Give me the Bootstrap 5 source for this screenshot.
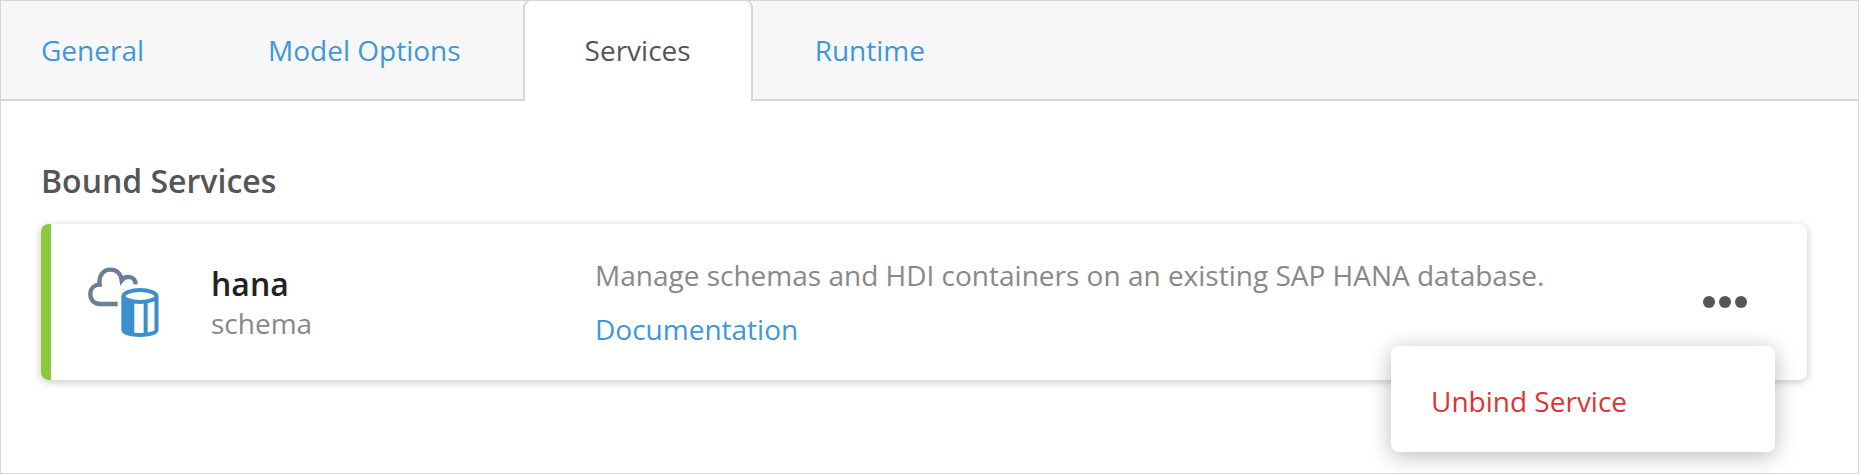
<!DOCTYPE html>
<html lang="en">
<head>
<meta charset="utf-8">
<meta name="viewport" content="width=device-width, initial-scale=1">
<title>Services</title>
<link href="https://cdn.jsdelivr.net/npm/bootstrap@5.3.0/dist/css/bootstrap.min.css" rel="stylesheet">
<style>
  body { font-family: "Open Sans", sans-serif; font-size: 28px; line-height: 38px; color: #555; }
  a { color: #3f97d9; text-decoration: none; }
  .app-frame { height: 474px; border: 1px solid #d6d6d6; }
  .app-tabs { height: 100px; background: #f7f7f7; border-bottom: 2px solid #d6d6d6; padding-left: 0; }
  .app-tabs .nav-item { height: 100px; }
  .app-tabs .nav-link { height: 100px; margin: 0; padding: 30px 60px; border: 2px solid transparent; border-top: 0; border-bottom: 0; border-radius: 8px 8px 0 0; color: #3f97d9; }
  .app-tabs .nav-item:first-child .nav-link { padding-left: 38px; }
  .app-tabs .nav-link.active { color: #555; background: #fff; border-color: #d6d6d6; box-shadow: 0 -1px #d6d6d6; }
  .page-body { padding: 60px 51px 0 40px; }
  .section-title { font-size: 32px; line-height: 40px; font-weight: 600; margin: 0 0 23px; }
  .service-card { height: 156px; border: 0; border-left: 10px solid #8cc83c; border-radius: 8px; box-shadow: 0 2px 8px rgba(0,0,0,.22); }
  .service-icon { width: 160px; padding: 36px 0 0 29px; }
  .service-name { width: 384px; padding-top: 39px; }
  .service-name h2 { font-size: 32px; line-height: 41px; font-weight: 600; color: #222; }
  .service-info { padding-top: 32px; }
  .service-info a { margin-top: 16px; }
  .soft { color: #888; }
  .service-actions { right: 60px; top: 72px; }
  .dots-btn { line-height: 0; }
  .service-menu { right: 32px; top: 122px; width: 384px; height: 106px; padding: 36px 40px 0; border-radius: 8px; box-shadow: 0 4px 22px rgba(0,0,0,.27); background: #fff; }
  .service-menu .dropdown-item { padding: 0; color: #dc3535; line-height: 38px; }
</style>
</head>
<body>
<div class="app-frame overflow-hidden">
  <ul class="nav nav-tabs app-tabs">
    <li class="nav-item"><a class="nav-link" href="#">General</a></li>
    <li class="nav-item"><a class="nav-link" href="#">Model Options</a></li>
    <li class="nav-item"><a class="nav-link active" href="#">Services</a></li>
    <li class="nav-item"><a class="nav-link" href="#">Runtime</a></li>
  </ul>
  <main class="page-body">
    <h1 class="section-title">Bound Services</h1>
    <div class="card service-card flex-row align-items-start position-relative">
      <div class="service-icon flex-shrink-0">
        <svg class="d-block" width="84" height="84" viewBox="0 0 252 252" fill="none">
          <path d="M113 132H62C42 132 31 119 31 102C31 86 42 75 59 74C55 48 69 29 91 29C109 29 122 40 125 61C137 45 166 48 167 73" stroke="#6a7f93" stroke-width="13"/>
          <path d="M130 107V211C130 218 143 223 163 225V127C143 124 131 117 130 107Z" fill="#3c8fce"/>
          <ellipse cx="180" cy="108" rx="49.500" ry="18" stroke="#3c8fce" stroke-width="12"/>
          <path d="M130 108V209C130 230 229.500 230 229.500 209V108M197 124V224" stroke="#3c8fce" stroke-width="12"/>
        </svg>
      </div>
      <div class="service-name flex-shrink-0">
        <h2 class="m-0">hana</h2>
        <div class="soft">schema</div>
      </div>
      <div class="service-info">
        <div class="soft text-nowrap">Manage schemas and HDI containers on an existing SAP HANA database.</div>
        <a class="d-block" href="#">Documentation</a>
      </div>
      <div class="service-actions position-absolute">
        <button class="btn p-0 border-0 d-block dots-btn" type="button" aria-label="Actions">
          <svg width="44" height="12" fill="#555"><circle cx="6" cy="6" r="6"/><circle cx="22" cy="6" r="6"/><circle cx="38" cy="6" r="6"/></svg>
        </button>
      </div>
      <div class="service-menu position-absolute">
        <a class="dropdown-item" href="#">Unbind Service</a>
      </div>
    </div>
  </main>
</div>
<script src="https://cdn.jsdelivr.net/npm/bootstrap@5.3.0/dist/js/bootstrap.bundle.min.js"></script>
</body>
</html>
